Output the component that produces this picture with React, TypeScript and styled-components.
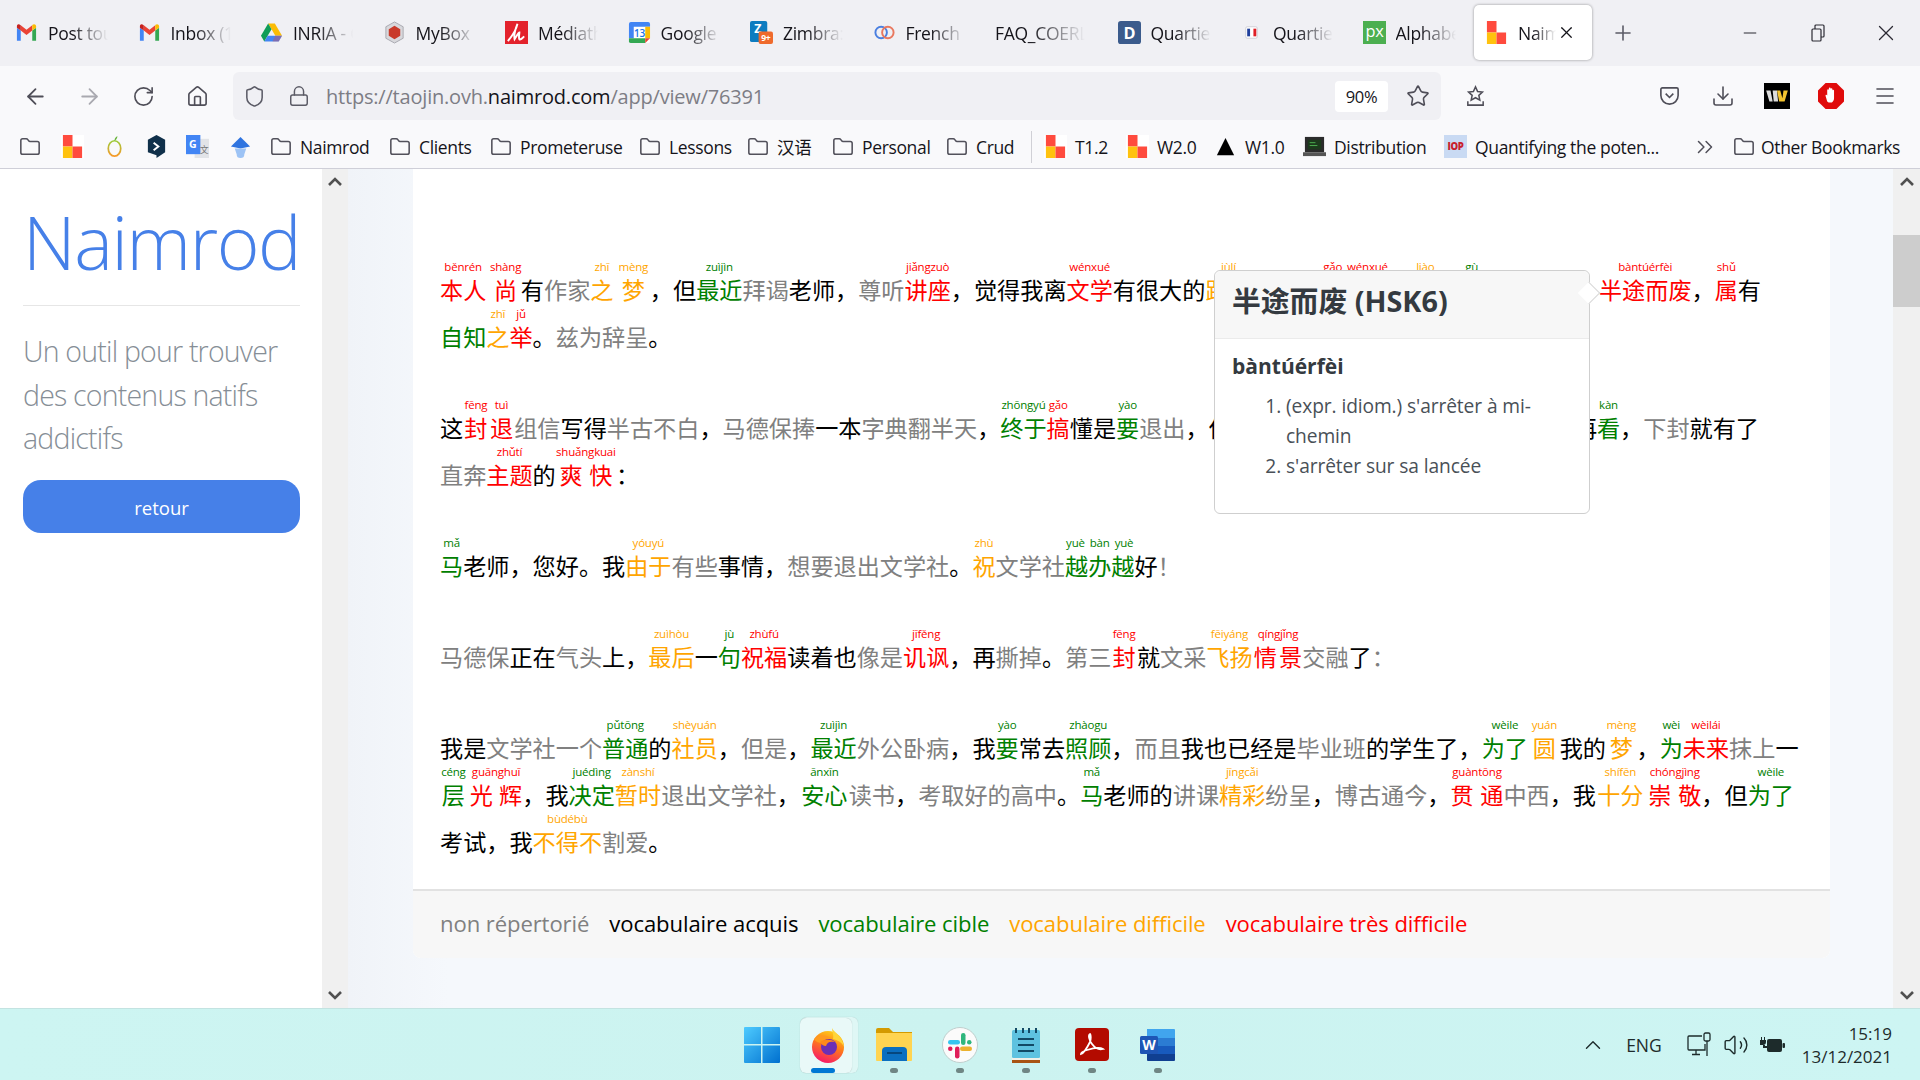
import React from "react";
import styled, { createGlobalStyle } from "styled-components";
import { ArrowLeft, ArrowRight, RotateCw, House, Shield, Lock, Star, Download, Menu, X, Plus, Minus, Folder, ChevronsRight, ChevronUp, Volume2 } from "lucide-react";

const Global = createGlobalStyle`
  html, body { margin: 0; padding: 0; width: 1920px; height: 1080px; overflow: hidden; background: #fff; }
  body { font-family: "Open Sans", "Noto Sans CJK SC", sans-serif; }
  * { box-sizing: border-box; }
`;

const Frame = styled.div`display: flex; flex-direction: column; width: 1920px; height: 1080px; overflow: hidden;`;

/* ---------- tab strip ---------- */
const TabStrip = styled.div`display: flex; align-items: flex-start; height: 66px; padding: 5px 0 0 4px; background: #f0f0f4;`;
const Tab = styled.div<{ $active?: boolean }>`
  position: relative; display: flex; align-items: center; gap: 10px; width: ${p => (p.$active ? 118 : 122.5)}px; height: 55px;
  padding-left: 11px; border-radius: 5px; color: #15141a; font-size: 17.5px; letter-spacing: -0.3px;
  background: ${p => (p.$active ? "#fff" : "transparent")};
  box-shadow: ${p => (p.$active ? "0 0 3px rgba(0,0,0,.4)" : "none")};
`;
const TabLabel = styled.span<{ $w: number }>`
  display: block; width: ${p => p.$w}px; overflow: hidden; white-space: nowrap;
  -webkit-mask-image: linear-gradient(90deg, #000 40%, transparent 100%);
  mask-image: linear-gradient(90deg, #000 40%, transparent 100%);
`;
const TabFavicon = styled.span`display: flex; width: 23px; height: 23px; flex: none;`;
const TabClose = styled.span`position: absolute; right: 16px; top: 18px; display: flex; color: #15141a;`;
const NewTab = styled.div`display: flex; align-items: center; justify-content: center; width: 62px; height: 55px; color: #5b5b66;`;
const WindowControls = styled.div`display: flex; margin-left: auto; margin-top: -5px;`;
const WindowButton = styled.div`display: flex; align-items: center; justify-content: center; width: 68px; height: 66px; color: #2b2a33;`;

/* ---------- nav toolbar ---------- */
const Toolbar = styled.div`display: flex; align-items: center; height: 60px; padding: 0 8px; background: #f9f9fb;`;
const ToolButton = styled.div<{ $dim?: boolean }>`display: flex; align-items: center; justify-content: center; flex: none; width: 54px; height: 48px; color: ${p => (p.$dim ? "#a9a9b0" : "#4f4e58")};`;
const UrlBar = styled.div`display: flex; align-items: center; width: 1208px; height: 48px; margin: 0 7px 0 9px; padding-left: 10px; border-radius: 6px; background: #f0f0f4; color: #5b5b66;`;
const UrlIcon = styled.span<{ $mr: number }>`display: flex; margin-right: ${p => p.$mr}px;`;
const UrlText = styled.span`color: #7d7d85; font-size: 20px; letter-spacing: -0.2px; white-space: nowrap;`;
const UrlHost = styled.span`color: #15141a;`;
const ZoomBadge = styled.span`display: flex; align-items: center; justify-content: center; width: 53px; height: 31px; margin-left: auto; border-radius: 4px; background: #fff; color: #15141a; font-size: 16.5px; letter-spacing: -0.3px;`;
const UrlStar = styled.span`display: flex; justify-content: center; width: 53px; padding-left: 7px; color: #4f4e58;`;
const Spacer = styled.div`flex: 1;`;

/* ---------- bookmarks ---------- */
const Bookmarks = styled.div`display: flex; align-items: center; height: 43px; padding: 0 0 1px 19px; background: #f9f9fb; border-bottom: 1px solid #cfcfd8; color: #15141a; font-size: 17.5px; letter-spacing: -0.35px;`;
const Bookmark = styled.div<{ $w: number; $gap?: number }>`display: flex; align-items: center; gap: ${p => p.$gap ?? 8}px; flex: none; width: ${p => p.$w}px; white-space: nowrap; color: #15141a; svg.folder { color: #52515b; flex: none; }`;
const BookmarkRule = styled.div`flex: none; width: 1px; height: 32px; margin-right: 12px; background: #d0d0d6;`;

/* ---------- page ---------- */
const Page = styled.div`display: flex; height: 839px;`;
const Sidebar = styled.aside`display: flex; flex-direction: column; flex: none; width: 322px; padding: 0 22px 0 23px; background: #fff;`;
const Brand = styled.h1`margin: 27px 0 0; padding: 0 0 17px; border-bottom: 1px solid #e6e6e6; color: #4680e8; font-size: 73px; font-weight: 300; line-height: 92px; letter-spacing: -1.4px; white-space: nowrap;`;
const Tagline = styled.p`margin: 24px 0 0; color: #868e96; font-size: 28.5px; font-weight: 300; line-height: 43.5px; letter-spacing: -0.8px;`;
const BackButton = styled.button`display: block; width: 100%; height: 53px; margin-top: 19px; padding-top: 3px; border: 0; border-radius: 18px; background: #4680e8; color: #fff; font-family: inherit; font-size: 18.5px;`;
const Track = styled.div<{ $w: number }>`display: flex; flex-direction: column; align-items: center; flex: none; width: ${p => p.$w}px; padding: 8px 0; background: #f0f0f0;`;
const TrackArrow = styled.svg`display: block; width: 14px; height: 10px; flex: none; fill: none; stroke: #505050; stroke-width: 2.6;`;
const TrackEnd = styled.div`margin-top: auto; display: flex;`;
const Thumb = styled.div`align-self: stretch; height: 72px; margin-top: 48px; background: #cdcdcd;`;
const Main = styled.main`display: flex; flex-direction: column; flex: 1; min-width: 0; padding: 0 63px 50px 65px; background: linear-gradient(90deg, #f0f3f8 0, #f5f8fc 100px);`;
const Card = styled.article`position: relative; display: flex; flex-direction: column; flex: 1; min-height: 0; border-radius: 0 0 8px 8px; background: #fff;`;
const Reading = styled.div`flex: 1; min-height: 0; padding: 96px 0 0 27px;`;
const Passage = styled.div`margin-bottom: 44px; color: #000; font-family: "Noto Sans CJK SC", "Open Sans", sans-serif; font-size: 23.15px; line-height: 47px;`;
const TextLine = styled.div`white-space: nowrap; height: 47px;`;
const tones: Record<string, string> = { K: "#000", H: "#000", N: "#808080", G: "#008000", O: "#ffa500", R: "#ff0000" };
const Word = styled.span<{ $t: string }>`color: ${p => tones[p.$t]}; ${p => (p.$t === "H" ? "letter-spacing: -0.3px;" : "")}`;
const RubyWord = styled.ruby<{ $t: string; $gap: number }>`color: ${p => tones[p.$t]}; margin: 0 ${p => p.$gap}px;`;
const Pinyin = styled.rt<{ $pad: number }>`position: relative; top: -4px; padding: 0 ${p => p.$pad}px; font-family: "Open Sans", sans-serif; font-size: 11.5px; line-height: 1; letter-spacing: -0.2px;`;
const Legend = styled.footer`display: flex; align-items: center; gap: 20px; flex: none; height: 69px; padding: 0 0 4px 27px; border-top: 2px solid #e2e2e2; border-radius: 0 0 8px 8px; background: #f7f7f7; font-size: 22.1px; letter-spacing: -0.1px;`;

/* ---------- popover ---------- */
const Popover = styled.section`position: absolute; left: 801px; top: 101px; width: 376px; height: 244px; border: 1px solid #cfcfcf; border-radius: 6px; background: #fff; color: #343a40;
  &::after { content: ""; position: absolute; right: -8px; top: 14px; width: 15px; height: 15px; transform: rotate(45deg); border-top: 1px solid #d8d8d8; border-right: 1px solid #d8d8d8; background: #fff; }
`;
const PopoverHead = styled.h3`margin: 0; height: 68px; padding: 0 17px; border-bottom: 1px solid #ebebeb; border-radius: 6px 6px 0 0; background: #f7f7f7; font-size: 28.8px; font-weight: 700; line-height: 60px; white-space: nowrap;`;
const PopoverBody = styled.div`padding: 12px 17px 0;`;
const PopoverPinyin = styled.h4`margin: 0 0 10px; font-size: 21px; font-weight: 700; line-height: 30px;`;
const Senses = styled.ol`margin: 0; padding-left: 54px; color: #495057; font-size: 19.2px; line-height: 30px; letter-spacing: -0.1px;`;

/* ---------- taskbar ---------- */
const Taskbar = styled.div`display: flex; align-items: center; height: 72px; padding-left: 729px; border-top: 1px solid #c3e3e1; background: linear-gradient(90deg, #cdf5f2, #ccf3f0 50%, #cdf5f3); color: #1a2a2a;`;
const Slot = styled.div<{ $on?: boolean }>`position: relative; display: flex; align-items: center; justify-content: center; flex: none; width: 66px; height: 56px; margin-top: 0;
  ${p => p.$on && `&::before { content: ""; position: absolute; left: 6px; top: 0; width: 57px; height: 56px; border-radius: 6px; background: #dff7f5; box-shadow: 0 0 1px rgba(0,0,0,.2); } &::after { content: ""; position: absolute; left: 5px; top: 1px; width: 52px; height: 55px; border-radius: 6px; background: #e9f9f8; box-shadow: 0 0 1px rgba(0,0,0,.25); }`}
  svg { position: relative; z-index: 1; }
`;
const RunDot = styled.span<{ $on?: boolean }>`position: absolute; z-index: 2; left: 50%; bottom: 0; width: ${p => (p.$on ? 24 : 8)}px; height: 5px; margin-left: ${p => (p.$on ? -17 : -4)}px; border-radius: 3px; background: ${p => (p.$on ? "#0078d4" : "#6f8684")};`;
const Tray = styled.div`display: flex; align-items: center; margin-left: auto; padding-right: 28px; color: #1d2b2b;`;
const TrayLang = styled.span`margin: 0 25px 0 20px; font-size: 17.5px;`;
const TrayIcon = styled.span<{ $mr: number }>`display: flex; margin-right: ${p => p.$mr}px;`;
const Clock = styled.div`margin-left: 17px; font-size: 17px; line-height: 23px; text-align: right; white-space: nowrap;`;

const Ic = styled.svg<{ $s?: number }>`display: block; flex: none; width: ${p => p.$s ?? 23}px; height: ${p => p.$s ?? 23}px;`;

/* ---------- drawings ---------- */
const Gmail = () => (<Ic viewBox="0 0 24 24"><path fill="#4285F4" d="M2 20.5h4V10L2 7z" /><path fill="#34A853" d="M18 20.5h4V7l-4 3z" /><path fill="#EA4335" d="M6 10V4.5l6 4.7 6-4.7V10l-6 4.6z" /><path fill="#FBBC04" d="M18 4.5V10l4-3V5.5C22 3.4 19.7 2.6 18.3 3.9z" /><path fill="#C5221F" d="M2 7l4 3V4.5L5 3.8C3.5 2.7 2 3.6 2 5.5z" /></Ic>);
const Drive = () => (<Ic viewBox="0 0 24 24"><path fill="#fbbc04" d="M8.5 2.5h7l7.5 13h-7z" /><path fill="#0f9d58" d="M8.5 2.5 1 15.5l3.5 6 7.5-13z" /><path fill="#4285f4" d="M8 15.5h15l-3.5 6h-15z" /><path fill="#ea4335" d="M16 15.5h7l-3.5 6H13z" opacity=".35" /></Ic>);
const MyBox = () => (<Ic viewBox="0 0 24 24"><path fill="#d8d8dc" stroke="#a8a8b0" d="M12 1l9 5v12l-9 5-9-5V6z" /><path fill="#c93a2a" d="M12 5l6 3.5v7L12 19l-6-3.500v-7z" /></Ic>);
const Mediat = () => (<Ic viewBox="0 0 24 24"><rect width="24" height="24" fill="#e3222c" /><path fill="none" stroke="#fff" strokeWidth="2" d="M3 21C8 15 12 8 13 3c-2 5-4 12-3 16 2-3 4-7 5-7 0 2-1 5 0 7 1 1 3-1 5-3" /></Ic>);
const Calendar = () => (<Ic viewBox="0 0 24 24"><rect x="1" y="1" width="22" height="22" rx="2" fill="#fff" /><path fill="#4285f4" d="M1 3a2 2 0 0 1 2-2h18a2 2 0 0 1 2 2v3H6v12H1z" /><path fill="#34a853" d="M1 18h17v5H3a2 2 0 0 1-2-2z" /><path fill="#fbbc04" d="M18 6h5v12h-5z" /><path fill="#ea4335" d="M18 18h5l-5 5z" /><text x="12" y="16.500" fontSize="10.500" textAnchor="middle" fill="#1a73e8" fontFamily="Open Sans" fontWeight="600">13</text></Ic>);
const Zimbra = () => (<Ic viewBox="0 0 24 24"><rect x="0" y="0" width="18" height="22" rx="2" fill="#0d7cc0" /><text x="8" y="13" fontSize="13" textAnchor="middle" fill="#fff" fontFamily="Open Sans" fontWeight="700">Z</text><rect x="9" y="11" width="15" height="13" rx="2" fill="#ef6a2c" /><text x="16.500" y="21" fontSize="9" textAnchor="middle" fill="#fff" fontFamily="Open Sans" fontWeight="700">9+</text></Ic>);
const Rings = () => (<Ic viewBox="0 0 24 24"><circle cx="8.500" cy="12" r="6" fill="none" stroke="#4a7fe0" strokeWidth="2" /><circle cx="15.500" cy="12" r="6" fill="none" stroke="#e9785f" strokeWidth="2" /></Ic>);
const Dee = () => (<Ic viewBox="0 0 24 24"><rect width="24" height="24" rx="3" fill="#3b5b8c" /><text x="12" y="18.500" fontSize="17" textAnchor="middle" fill="#fff" fontFamily="Open Sans" fontWeight="700">D</text></Ic>);
const Tricolor = () => (<Ic viewBox="0 0 24 24"><rect x="6" y="6" width="12" height="12" rx="1.500" fill="#fff" stroke="#cfcfd6" /><rect x="7.500" y="8" width="3" height="8" fill="#1f3f9c" /><rect x="14" y="8" width="3" height="8" fill="#e01f26" /></Ic>);
const Pixel = () => (<Ic viewBox="0 0 24 24"><rect width="24" height="24" fill="#4caf50" /><text x="12" y="17" fontSize="17" textAnchor="middle" fill="#fff" fontFamily="Open Sans">px</text></Ic>);
const NaimLogo = () => (<Ic viewBox="0 0 24 24"><rect width="24" height="24" fill="#fff" /><rect x="2" y="0" width="10" height="12" fill="#ff4b3e" /><rect x="2" y="12" width="10" height="12" fill="#ffc20e" /><rect x="12" y="12" width="10" height="12" fill="#ff4b3e" /></Ic>);
const Apple = () => (<Ic viewBox="0 0 24 24"><ellipse cx="12" cy="14" rx="6.500" ry="8" fill="none" stroke="url(#ag)" strokeWidth="1.800" /><path d="M12 6c0-2 1-4 3-5 0 2-1 4-3 5z" fill="#69b53c" /><defs><linearGradient id="ag" x1="0" y1="0" x2="0" y2="1"><stop offset="0" stopColor="#9ccc3c" /><stop offset="1" stopColor="#f79a2a" /></linearGradient></defs></Ic>);
const HexMark = () => (<Ic viewBox="0 0 24 24"><path fill="#10304a" d="M12 0l9 5v13l-9 6v-3l-9-3V5z" /><path fill="none" stroke="#fff" strokeWidth="2" d="M9 8l5 4-5 4" /></Ic>);
const GTrans = () => (<Ic viewBox="0 0 24 24"><rect x="9" y="4" width="15" height="20" fill="#e2e4e8" /><rect x="0" y="0" width="15" height="20" fill="#4285f4" /><text x="7" y="14" fontSize="11" textAnchor="middle" fill="#fff" fontFamily="Open Sans" fontWeight="700">G</text><text x="19" y="19" fontSize="9" textAnchor="middle" fill="#777" fontFamily="Noto Sans CJK SC">文</text></Ic>);
const BlueCap = () => (<Ic viewBox="0 0 24 24"><path fill="#2f74e0" d="M12 2l10 10-10 2L2 12z" /><path fill="#9dc3f5" d="M6 14h12l-2 6a4 4 0 0 1-8 0z" /></Ic>);
const Peak = () => (<Ic viewBox="0 0 24 24"><path fill="#000" d="M12 3l9 18H3z" /></Ic>);
const Monitor = () => (<Ic viewBox="0 0 24 24"><rect x="2" y="2" width="20" height="16" fill="#2b2b2b" /><rect x="5" y="5" width="14" height="10" fill="#1c3a1c" /><path d="M7 8h6M7 11h8" stroke="#4caf50" /><rect y="18" width="24" height="4" fill="#555" /></Ic>);
const Iop = () => (<Ic viewBox="0 0 24 24"><rect width="24" height="24" fill="#c9daf3" /><text x="12" y="16" fontSize="10" textAnchor="middle" fill="#c8202c" fontFamily="Open Sans" fontWeight="800">IOP</text></Ic>);
const SaveStar = () => (<Ic viewBox="0 0 24 24" fill="none" stroke="currentColor" strokeWidth="1.600"><path d="M12 2l2.200 4.800 5 .6-3.700 3.400 1 5-4.500-2.500-4.500 2.500 1-5L4.800 7.400l5-.6z" /><path d="M4 17v4h16v-4" /></Ic>);
const Pocket = () => (<Ic viewBox="0 0 24 24" fill="none" stroke="currentColor" strokeWidth="1.700"><path d="M3 4.500A1.500 1.500 0 0 1 4.500 3h15A1.500 1.500 0 0 1 21 4.500V11a9 9 0 0 1-18 0z" /><path d="M8 9l4 4 4-4" /></Ic>);
const WExt = () => (<Ic $s={26} viewBox="0 0 24 24"><rect width="24" height="24" fill="#000" /><path fill="#ddd" d="M2 7h4l2 10H5zM8 7h4l1 10H9z" /><path fill="#f4c430" d="M12 7h3l2 7 1-7h4l-3 10h-5z" /></Ic>);
const StopHand = () => (<Ic $s={26} viewBox="0 0 24 24"><path fill="#e00b0b" d="M7 0h10l7 7v10l-7 7H7l-7-7V7z" /><path fill="#fff" d="M8.500 17 7 12c-.3-1 1-1.500 1.500-.5V6.500c0-1 1.500-1 1.500 0V5c0-1 1.700-1 1.700 0v.5c0-1 1.600-1 1.600 0V7c0-1 1.500-1 1.500 0v7c0 2-1 3-2 4h-3z" /></Ic>);

const Win = () => (<Ic $s={36} viewBox="0 0 36 36"><defs><linearGradient id="wn" x1="0" y1="0" x2="1" y2="1"><stop offset="0" stopColor="#4ecbff" /><stop offset="1" stopColor="#0070cf" /></linearGradient></defs><path fill="url(#wn)" d="M0 1a1 1 0 0 1 1-1h16v17H0zM18.500 0H35a1 1 0 0 1 1 1v16H18.500zM0 18.500h17V36H1a1 1 0 0 1-1-1zM18.500 18.500H36V35a1 1 0 0 1-1 1H18.500z" /></Ic>);
const Fox = () => (<Ic $s={36} viewBox="0 0 36 36"><defs><linearGradient id="fx" x1="0.700" y1="0" x2="0.300" y2="1"><stop offset="0" stopColor="#ffd11a" /><stop offset=".45" stopColor="#ff7a1a" /><stop offset="1" stopColor="#f5156c" /></linearGradient></defs><circle cx="18" cy="20" r="16" fill="url(#fx)" /><path fill="#ffd53a" d="M22 1c1 4 11 8 12 19-2-5-7-7-11-8 1-4-1-7-1-11z" /><path fill="#ff9a1f" d="M4 12c5-5 13-4 17-1-5 0-8 2-9 5-3 0-6-1-8-4z" /><circle cx="19" cy="20" r="8" fill="#6b2fb5" /><path fill="#ff8a1c" d="M10 15c4-3 12-3 15 0-5-1-8 0-9 4-3 0-5-2-6-4z" /></Ic>);
const Files = () => (<Ic $s={36} viewBox="0 0 36 36"><path fill="#d49a00" d="M0 3a2 2 0 0 1 2-2h11l4 4h19v6H0z" /><path fill="#ffd451" d="M0 6h36v27a1 1 0 0 1-1 1H1a1 1 0 0 1-1-1z" /><path fill="#0b6fc0" d="M6 34V24a4 4 0 0 1 4-4h17a4 4 0 0 1 4 4v10z" /><rect x="11" y="25" width="15" height="2" fill="#06477e" /></Ic>);
const Slack = () => (<Ic $s={36} viewBox="0 0 36 36"><circle cx="18" cy="18" r="17.500" fill="#fbfbfb" stroke="#bfcfcd" /><rect x="6" y="13" width="12" height="4.500" rx="2.250" fill="#36c5f0" /><rect x="19" y="6" width="4.500" height="12" rx="2.250" fill="#2eb67d" /><rect x="25" y="13" width="4.500" height="4.500" rx="2.250" fill="#2eb67d" /><rect x="18" y="19.500" width="12" height="4.500" rx="2.250" fill="#ecb22e" /><rect x="13" y="19.500" width="4.500" height="12" rx="2.250" fill="#e01e5a" /><rect x="6" y="19.500" width="4.500" height="4.500" rx="2.250" fill="#e01e5a" /></Ic>);
const Notes = () => (<Ic $s={36} viewBox="0 0 36 36"><rect x="4" y="3" width="28" height="28" rx="1.500" fill="#5ec2e0" /><rect x="4" y="31" width="28" height="2" fill="#f0f0e8" /><rect x="4" y="33" width="28" height="3" fill="#a85414" /><path stroke="#124a66" strokeWidth="2" d="M8 1v5M15 1v5M21 1v5M28 1v5M10 12h16M10 18h16M10 24h16" /></Ic>);
const Acrobat = () => (<Ic $s={34} viewBox="0 0 34 34"><rect width="34" height="33" rx="4" fill="#b30b00" /><path fill="none" stroke="#fff" strokeWidth="1.800" d="M6 26c3-1 6-6 9-12 1-3 1-7 0-8-2 1-1 6 2 10 3 4 7 6 11 5-3-2-10-1-16 1-3 1-6 3-6 4z" /></Ic>);
const WordIc = () => (<Ic $s={36} viewBox="0 0 36 36"><path fill="#41a5ee" d="M7 2h27a1 1 0 0 1 1 1v8H7z" /><path fill="#2b7cd3" d="M7 11h28v8H7z" /><path fill="#185abd" d="M7 19h28v8H7z" /><path fill="#103f91" d="M7 27h28v6a1 1 0 0 1-1 1H8a1 1 0 0 1-1-1z" /><rect y="9" width="18" height="18" rx="1.500" fill="#1e55b5" /><text x="9" y="23" fontSize="14" textAnchor="middle" fill="#fff" fontFamily="Open Sans" fontWeight="700">W</text></Ic>);
const NetIc = () => (<Ic $s={25} viewBox="0 0 25 25" fill="none" stroke="currentColor" strokeWidth="1.300"><path d="M15 4H2a1 1 0 0 0-1 1v12a1 1 0 0 0 1 1h16v-6" /><path d="M9 18v4M5 22.500h8" /><rect x="17" y="1" width="6" height="8" rx="1.500" /><path d="M20 9v15" /></Ic>);
const PowerIc = () => (<Ic $s={26} viewBox="0 0 26 26" fill="currentColor"><path d="M1 8h6v2a3 3 0 0 1-3 3H1zM2 5v3h1V5zM5 5v3h1V5z" /><path d="M4 13v3h4v-2H6v-1z" /><rect x="8" y="7" width="15" height="13" rx="2" /><rect x="23.500" y="11" width="2.500" height="5" rx="1" /></Ic>);

const Fold = () => <Folder className="folder" size={22} strokeWidth={1.7} />;
const TrackUp = () => (<TrackArrow viewBox="0 0 14 10"><path d="M1 8l6-6 6 6" /></TrackArrow>);
const TrackDown = () => (<TrackArrow viewBox="0 0 14 10"><path d="M1 2l6 6 6-6" /></TrackArrow>);

const tabs: [React.ReactNode, string, number][] = [
  [<Gmail />, "Post tout", 60], [<Gmail />, "Inbox (1", 60], [<Drive />, "INRIA - G", 60], [<MyBox />, "MyBox", 60], [<Mediat />, "Médiath", 60],
  [<Calendar />, "Google", 60], [<Zimbra />, "Zimbra:", 60], [<Rings />, "French", 60], [null, "FAQ_COERL", 90], [<Dee />, "Quartier", 60], [<Tricolor />, "Quartier", 60], [<Pixel />, "Alphabet", 60],
];

/* token: tone letter, word, "|pinyin", then a spacing mark: ~ + * widen the ruby, ^ spreads its base */
const marks: Record<string, { gap: number; pad: number }> = {
  "~": { gap: 1.2, pad: 0 }, "+": { gap: 3.7, pad: 0 }, "*": { gap: 5, pad: 0 }, "^": { gap: 0, pad: 5 },
};

const passages: string[][] = [
  [
    "R本人|běnrén R尚|shàng+ K有 N作家 O之|zhī O梦|mèng* K， K但 G最近|zuìjìn N拜谒 K老师 K， N尊听 R讲座|jiǎngzuò K， K觉得我离 R文学|wénxué K有很大的 O距离|jùlí K， K不是 R搞|gǎo R文学|wénxué K的 O料|liào K， G故|gù K决定就此　 R半途而废|bàntúérfèi K， R属|shǔ K有",
    "G自知 O之|zhī R举|jǔ K。 N兹为辞呈 K。",
  ],
  [
    "K这 R封|fēng~ R退|tuì~ N组信 K写得 N半古不白 K， N马德保捧 K一本 N字典翻半天 K， G终于|zhōngyú R搞|gǎo K懂是 G要|yào N退出 K， H他也没有多说什么，只叫我回去等等再 G看|kàn K， N下封 K就有了",
    "N直奔 R主题|zhǔtí K的 R爽快|shuǎngkuai+ K：",
  ],
  ["G马|mǎ K老师 K， K您好 K。 K我 O由于|yóuyú N有些 K事情 K， N想要退出文学社 K。 O祝|zhù N文学社 G越办越|yuè_bàn_yuè K好 N！"],
  ["N马德保 K正在 N气头 K上 K， O最后|zuìhòu K一 G句|jù R祝福|zhùfú K读着也 N像是 R讥讽|jīfěng K， K再 N撕掉 K。 N第三 R封|fēng~ K就 N文采 O飞扬|fēiyáng R情景|qíngjǐng^ N交融 K了 N："],
  [
    "K我是 N文学社 N一个 G普通|pǔtōng K的 O社员|shèyuán K， N但是 K， G最近|zuìjìn N外公卧病 K， K我 G要|yào K常去 G照顾|zhàogu K， N而且 K我也已经是 N毕业班 K的学生了 K， G为了|wèile O圆|yuán+ K我的 O梦|mèng+ K， G为|wèi R未来|wèilái N抹上 K一",
    "G层|céng~ R光辉|guānghuī^ K， K我 G决定|juédìng O暂时|zànshí N退出文学社 K， G安心|ānxīn~ N读书 K， N考取好的高中 K。 G马|mǎ K老师的 N讲课 O精彩|jīngcǎi N纷呈 K， N博古通今 K， R贯通|guàntōng^ N中西 K， K我 O十分|shífēn~ R崇敬|chóngjìng^ K， K但 G为了|wèile",
    "K考试 K， K我 O不得不|bùdébù N割爱 K。",
  ],
];

const renderLine = (line: string) =>
  line.split(" ").map((tok, i) => {
    const tone = tok[0];
    const [text, raw] = tok.slice(1).split("|");
    if (raw) {
      const mark = marks[raw[raw.length - 1]];
      const py = (mark ? raw.slice(0, -1) : raw).replace(/_/g, " ");
      return (
        <RubyWord key={i} $t={tone} $gap={mark ? mark.gap : 0}>
          {text}
          <Pinyin $pad={mark ? mark.pad : 0}>{py}</Pinyin>
        </RubyWord>
      );
    }
    return <Word key={i} $t={tone}>{text}</Word>;
  });

export default function App() {
  return (
    <Frame>
      <Global />
      <TabStrip>
        {tabs.map(([icon, label, w], i) => (
          <Tab key={i}>
            {icon && <TabFavicon>{icon}</TabFavicon>}
            <TabLabel $w={w}>{label}</TabLabel>
          </Tab>
        ))}
        <Tab $active>
          <TabFavicon><NaimLogo /></TabFavicon>
          <TabLabel $w={38}>Naimrod</TabLabel>
          <TabClose><X size={19} strokeWidth={1.6} /></TabClose>
        </Tab>
        <NewTab><Plus size={24} strokeWidth={1.6} /></NewTab>
        <WindowControls>
          <WindowButton><Minus size={20} strokeWidth={1.2} /></WindowButton>
          <WindowButton>
            <Ic $s={18} viewBox="0 0 18 18" fill="none" stroke="currentColor" strokeWidth="1.200"><rect x="3" y="5" width="9" height="12" rx="1" /><path d="M6 5V2a1 1 0 0 1 1-1h7a1 1 0 0 1 1 1v10a1 1 0 0 1-1 1h-2" /></Ic>
          </WindowButton>
          <WindowButton><X size={26} strokeWidth={1.2} /></WindowButton>
        </WindowControls>
      </TabStrip>

      <Toolbar>
        <ToolButton><ArrowLeft size={25} strokeWidth={1.7} /></ToolButton>
        <ToolButton $dim><ArrowRight size={25} strokeWidth={1.7} /></ToolButton>
        <ToolButton><RotateCw size={23} strokeWidth={1.7} /></ToolButton>
        <ToolButton><House size={23} strokeWidth={1.7} /></ToolButton>
        <UrlBar>
          <UrlIcon $mr={22}><Shield size={23} strokeWidth={1.6} /></UrlIcon>
          <UrlIcon $mr={16}><Lock size={22} strokeWidth={1.6} /></UrlIcon>
          <UrlText>https://taojin.ovh.<UrlHost>naimrod.com</UrlHost>/app/view/76391</UrlText>
          <ZoomBadge>90%</ZoomBadge>
          <UrlStar><Star size={24} strokeWidth={1.6} /></UrlStar>
        </UrlBar>
        <ToolButton><SaveStar /></ToolButton>
        <Spacer />
        <ToolButton><Pocket /></ToolButton>
        <ToolButton><Download size={24} strokeWidth={1.6} /></ToolButton>
        <ToolButton><WExt /></ToolButton>
        <ToolButton><StopHand /></ToolButton>
        <ToolButton><Menu size={24} strokeWidth={1.6} /></ToolButton>
      </Toolbar>

      <Bookmarks>
        <Bookmark $w={42}><Fold /></Bookmark>
        <Bookmark $w={42}><NaimLogo /></Bookmark>
        <Bookmark $w={42}><Apple /></Bookmark>
        <Bookmark $w={41}><HexMark /></Bookmark>
        <Bookmark $w={43}><GTrans /></Bookmark>
        <Bookmark $w={41}><BlueCap /></Bookmark>
        <Bookmark $w={119}><Fold />Naimrod</Bookmark>
        <Bookmark $w={101}><Fold />Clients</Bookmark>
        <Bookmark $w={149}><Fold />Prometeruse</Bookmark>
        <Bookmark $w={108}><Fold />Lessons</Bookmark>
        <Bookmark $w={85}><Fold />汉语</Bookmark>
        <Bookmark $w={114}><Fold />Personal</Bookmark>
        <Bookmark $w={85}><Fold />Crud</Bookmark>
        <BookmarkRule />
        <Bookmark $w={82}><NaimLogo />T1.2</Bookmark>
        <Bookmark $w={88}><NaimLogo />W2.0</Bookmark>
        <Bookmark $w={89}><Peak />W1.0</Bookmark>
        <Bookmark $w={141}><Monitor />Distribution</Bookmark>
        <Bookmark $w={248}><Iop />Quantifying the poten...</Bookmark>
        <Bookmark $w={41}><ChevronsRight size={26} strokeWidth={1.4} color="#4f4e58" /></Bookmark>
        <Bookmark $w={182} $gap={6}><Fold />Other Bookmarks</Bookmark>
      </Bookmarks>

      <Page>
        <Sidebar>
          <Brand>Naimrod</Brand>
          <Tagline>Un outil pour trouver des contenus natifs addictifs</Tagline>
          <BackButton>retour</BackButton>
        </Sidebar>
        <Track $w={26}>
          <TrackUp />
          <TrackEnd><TrackDown /></TrackEnd>
        </Track>
        <Main>
          <Card>
            <Reading>
              {passages.map((p, i) => (
                <Passage key={i}>
                  {p.map((l, j) => <TextLine key={j}>{renderLine(l)}</TextLine>)}
                </Passage>
              ))}
            </Reading>
            <Legend>
              <Word $t="N">non répertorié</Word>
              <Word $t="K">vocabulaire acquis</Word>
              <Word $t="G">vocabulaire cible</Word>
              <Word $t="O">vocabulaire difficile</Word>
              <Word $t="R">vocabulaire très difficile</Word>
            </Legend>
            <Popover>
              <PopoverHead>半途而废 (HSK6)</PopoverHead>
              <PopoverBody>
                <PopoverPinyin>bàntúérfèi</PopoverPinyin>
                <Senses>
                  <li>(expr. idiom.) s'arrêter à mi-chemin</li>
                  <li>s'arrêter sur sa lancée</li>
                </Senses>
              </PopoverBody>
            </Popover>
          </Card>
        </Main>
        <Track $w={27}>
          <TrackUp />
          <Thumb />
          <TrackEnd><TrackDown /></TrackEnd>
        </Track>
      </Page>

      <Taskbar>
        <Slot><Win /></Slot>
        <Slot $on><Fox /><RunDot $on /></Slot>
        <Slot><Files /><RunDot /></Slot>
        <Slot><Slack /><RunDot /></Slot>
        <Slot><Notes /><RunDot /></Slot>
        <Slot><Acrobat /><RunDot /></Slot>
        <Slot><WordIc /><RunDot /></Slot>
        <Tray>
          <ChevronUp size={26} strokeWidth={1.3} />
          <TrayLang>ENG</TrayLang>
          <TrayIcon $mr={11}><NetIc /></TrayIcon>
          <TrayIcon $mr={10}><Volume2 size={26} strokeWidth={1.3} /></TrayIcon>
          <TrayIcon $mr={0}><PowerIc /></TrayIcon>
          <Clock>15:19<br />13/12/2021</Clock>
        </Tray>
      </Taskbar>
    </Frame>
  );
}
